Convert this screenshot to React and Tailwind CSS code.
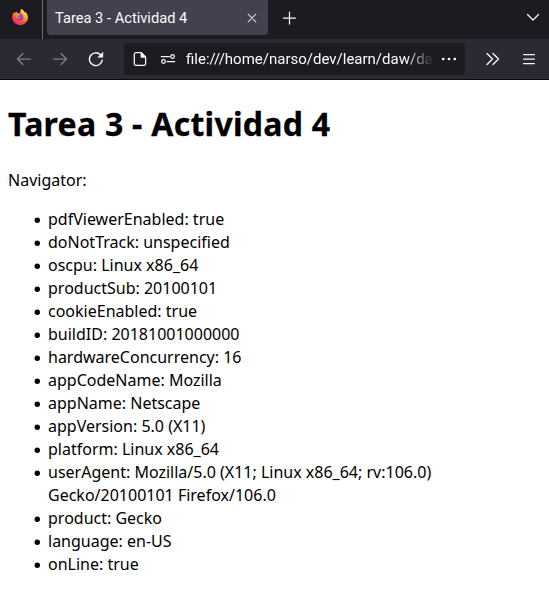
const properties = [
  'pdfViewerEnabled: true',
  'doNotTrack: unspecified',
  'oscpu: Linux x86_64',
  'productSub: 20100101',
  'cookieEnabled: true',
  'buildID: 20181001000000',
  'hardwareConcurrency: 16',
  'appCodeName: Mozilla',
  'appName: Netscape',
  'appVersion: 5.0 (X11)',
  'platform: Linux x86_64',
  'userAgent: Mozilla/5.0 (X11; Linux x86_64; rv:106.0) Gecko/20100101 Firefox/106.0',
  'product: Gecko',
  'language: en-US',
  'onLine: true',
];

function Icon({ children, className = '', size = 16 }) {
  return (
    <svg
      width={size}
      height={size}
      viewBox="0 0 16 16"
      fill="none"
      stroke="currentColor"
      strokeWidth="1.25"
      strokeLinecap="round"
      strokeLinejoin="round"
      className={`shrink-0 ${className}`}
    >
      {children}
    </svg>
  );
}

function FirefoxLogo() {
  return (
    <svg width="16" height="16" viewBox="0 0 16 16" className="shrink-0">
      <defs>
        <linearGradient id="flame" x1="0.85" y1="0.05" x2="0.25" y2="1">
          <stop offset="0" stopColor="#fff04a" />
          <stop offset="0.35" stopColor="#ffae28" />
          <stop offset="0.65" stopColor="#ff5038" />
          <stop offset="1" stopColor="#f0208c" />
        </linearGradient>
        <radialGradient id="globe" cx="0.6" cy="0.3" r="0.8">
          <stop offset="0" stopColor="#a250f5" />
          <stop offset="1" stopColor="#5438b8" />
        </radialGradient>
      </defs>
      <path
        d="M9.6 0.1C11.2 1 12.4 2.6 12.9 3.8L13.4 3.1C15 4.5 15.9 6.3 15.9 8.4C15.9 12.6 12.4 16 8 16S.2 12.6.2 8.3C.2 6.2 1 4.3 2.2 3.1L2.7 4.2C3.3 3.5 4 3.1 5 3.2L6.2 4.3L8.7 4.2C7.9 2.8 8.4 1.1 9.6.1Z"
        fill="url(#flame)"
      />
      <circle cx="8" cy="7.9" r="3.3" fill="url(#globe)" />
      <path d="M2.5 4.3C3.7 3.2 5 3.3 6 4.7L8.3 5.2C8.2 6.2 6.5 6.3 6.1 7.2C5.7 8.2 7.2 9.2 8.7 8.3C8.2 10.8 4.7 10.2 4.2 7.8C3.7 6.5 3 6 2.5 4.3Z" fill="#ff8a29" />
    </svg>
  );
}

function TabBar() {
  return (
    <div className="flex h-[39px] bg-[#1c1b22]">
      <div className="flex w-[43px] shrink-0 border-r border-[#6b6a73] pt-[9px] pl-3">
        <FirefoxLogo />
      </div>
      <div className="ml-1 flex h-[35px] w-[221px] shrink-0 items-center justify-between rounded-b bg-[#42414d] pr-2 pl-2">
        <span className="text-[14.67px] whitespace-nowrap">Tarea 3 - Actividad 4</span>
        <Icon className="text-[#d5d5db]">
          <path d="M4.2 4.2l7.6 7.6M11.8 4.2l-7.6 7.6" strokeWidth="1.1" />
        </Icon>
      </div>
      <Icon className="mt-[9.5px] ml-[13.5px]">
        <path d="M7.5 2v12M1.5 8h12" />
      </Icon>
      <Icon className="mt-[8.5px] mr-2 ml-auto">
        <path d="M2.5 5.5L8 11l5.5-5.5" />
      </Icon>
    </div>
  );
}

function AddressBar() {
  return (
    <div className="ml-5 flex h-8 w-[341px] shrink-0 items-center rounded bg-[#1c1b22]">
      <Icon className="ml-2">
        <path d="M3.8 1.7h5.4l4.4 4.4v6.7a1.5 1.5 0 0 1-1.5 1.5H3.8a1.5 1.5 0 0 1-1.5-1.5V3.2a1.5 1.5 0 0 1 1.5-1.5z" />
        <path d="M9.2 1.7v4.4h4.4z" fill="currentColor" />
      </Icon>
      <Icon className="ml-3">
        <path d="M1.3 5.5h8M7 10.5h7.7" />
        <circle cx="12.5" cy="5.5" r="1.8" />
        <circle cx="3.5" cy="10.5" r="1.8" />
      </Icon>
      <div className="ml-[10px] w-[248px] text-[15px] whitespace-nowrap [mask-image:linear-gradient(to_right,black_220px,rgba(0,0,0,0.3)_239px,transparent_249px)]">
        file:///home/narso/dev/learn/daw/da
      </div>
      <Icon className="ml-[7px]">
        <g fill="currentColor" stroke="none">
          <circle cx="2.2" cy="8" r="1.35" />
          <circle cx="8" cy="8" r="1.35" />
          <circle cx="13.8" cy="8" r="1.35" />
        </g>
      </Icon>
    </div>
  );
}

function Toolbar() {
  return (
    <div className="flex h-[41px] items-center border-b border-[#0c0c0d] bg-[#2b2a33]">
      <Icon className="ml-4 text-[#7f7e85]">
        <path d="M14.5 8h-13M7 2.5L1.5 8L7 13.5" />
      </Icon>
      <Icon className="ml-5 text-[#7f7e85]">
        <path d="M1.5 8h13M9 2.5L14.5 8L9 13.5" />
      </Icon>
      <Icon className="ml-5">
        <path d="M14.2 9.2A6.4 6.4 0 1 1 12.4 3.7" strokeWidth="1.4" />
        <path d="M14.8 1.6v4.6h-4.6z" fill="currentColor" strokeWidth="0.6" />
      </Icon>
      <AddressBar />
      <Icon className="ml-5">
        <path d="M2 2.5L7.5 8L2 13.5M8 2.5L13.5 8L8 13.5" />
      </Icon>
      <Icon className="ml-5">
        <path d="M2.6 3.5h10.8M2.6 8h10.8M2.6 12.5h10.8" />
      </Icon>
    </div>
  );
}

export default function App() {
  return (
    <div className="h-[610px] overflow-hidden bg-white">
      <header className="font-[Roboto,sans-serif] text-[#fbfbfe]">
        <TabBar />
        <Toolbar />
      </header>
      <main className="px-2 pt-[22px] font-['Noto_Sans',sans-serif] text-base leading-[23px] text-black">
        <h1 className="text-[32px] leading-[44px] font-bold tracking-[0.27px] [-webkit-text-stroke:0.3px_black]">Tarea 3 - Actividad 4</h1>
        <p className="mt-[23px]">Navigator:</p>
        <ul className="mt-4 pl-[26px]">
          {properties.map((property) => (
            <li key={property} className="flex">
              <svg className="mt-2 mr-1.5 size-2 shrink-0" viewBox="0 0 8 8">
                <circle cx="3.3" cy="4.3" r="2.7" />
              </svg>
              <span>{property}</span>
            </li>
          ))}
        </ul>
      </main>
    </div>
  );
}
